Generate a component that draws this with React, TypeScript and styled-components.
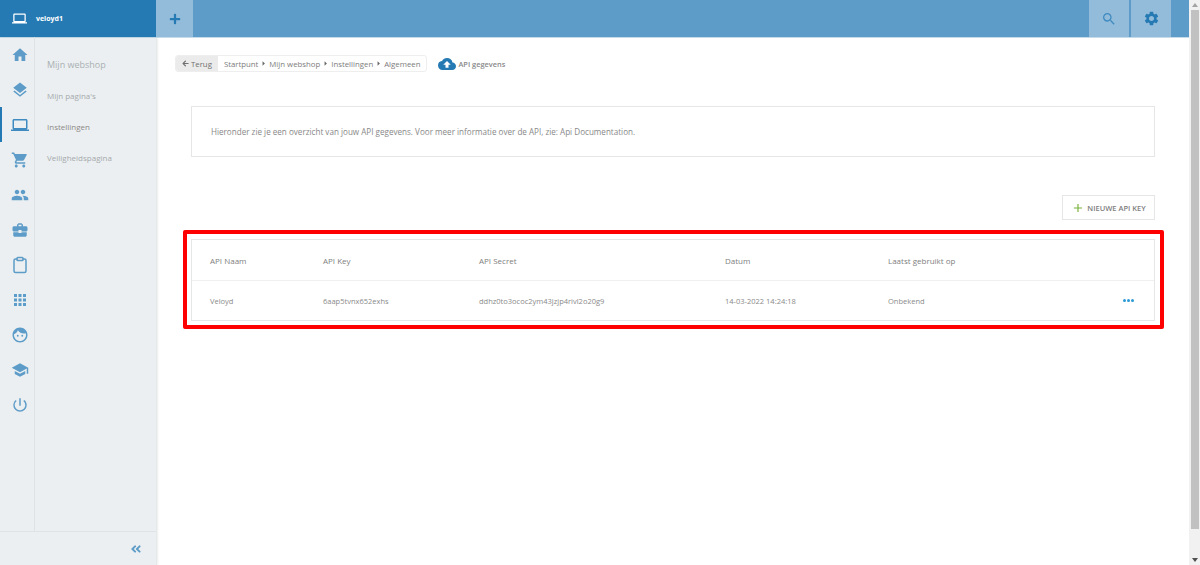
import React from "react";
import styled, { createGlobalStyle } from "styled-components";
import {
  MdHome, MdLayers, MdLaptop, MdShoppingCart, MdPeople, MdBusinessCenter, MdApps, MdFace,
  MdSchool, MdPowerSettingsNew, MdAdd, MdSearch, MdSettings, MdCloudUpload, MdArrowRight,
} from "react-icons/md";
import { FaAngleDoubleLeft, FaPlus, FaArrowLeft } from "react-icons/fa";
import { LuClipboard } from "react-icons/lu";

const Global = createGlobalStyle`
  html, body { margin: 0; padding: 0; height: 100%; overflow: hidden; background: #fff; }
  body { font-family: "Open Sans", "Liberation Sans", sans-serif; font-size: 8px; color: #777; }
  #root { height: 100%; }
`;

const Shell = styled.div`display: flex; height: 565px; width: 1200px;`;
const Page = styled.div`flex: 1; min-width: 0; display: flex; flex-direction: column; position: relative;`;
const Scrollbar = styled.div`width: 11px; background: #f1f1f1; display: flex; flex-direction: column; align-items: center; flex: none; padding-left: 1px; box-sizing: border-box;`;
const ScrollArrow = styled.div<{ $down?: boolean }>`
  height: 10px; width: 100%; display: flex; align-items: center; justify-content: center; flex: none;
  &::before {
    content: ""; border-left: 3px solid transparent; border-right: 3px solid transparent;
    ${(p) => (p.$down ? "border-top: 4px solid #505050;" : "border-bottom: 4px solid #a3a3a3;")}
  }
`;
const ScrollThumb = styled.div`height: 519px; flex: none; width: 8px; background: #c1c1c1;`;
const ScrollTrack = styled.div`flex: 1;`;

const TopBar = styled.header`
  height: 37px; flex: none; display: flex; background: #5d9cc8; border-bottom: 1px solid #c5dbea;
`;
const Brand = styled.div`
  width: 156px; flex: none; background: #267ab3; display: flex; align-items: center; color: #fff;
  padding-left: 12px; box-sizing: border-box; gap: 9px; font-size: 7px; font-weight: 700;
`;
const PlusButton = styled.div`
  width: 37px; background: #93bcdb; color: #267ab3; display: flex; align-items: center; justify-content: center; font-size: 12px;
`;
const Grow = styled.div`flex: 1;`;
const ToolButton = styled.div<{ $dark?: boolean }>`
  width: 40px; background: #93bcdb; color: ${(p) => (p.$dark ? "#267ab3" : "#3f8bc1")};
  display: flex; align-items: center; justify-content: center; font-size: ${(p) => (p.$dark ? 17 : 16)}px; margin-right: 2px;
`;
const TopEnd = styled.div`width: 16px;`;

const Body = styled.div`flex: 1; display: flex; min-height: 0;`;
const Side = styled.aside`
  width: 157px; flex: none; background: #ebeff1; display: flex; flex-direction: column;
  box-shadow: 1px 0 2px rgba(0,0,0,.08); border-right: 1px solid #e6e9ea; box-sizing: border-box;
`;
const SideMain = styled.div`flex: 1; display: flex; border-bottom: 1px solid #dfe3e5;`;
const IconRail = styled.nav`
  width: 35px; flex: none; border-right: 1px solid #dde2e4; box-sizing: border-box;
  display: flex; flex-direction: column; margin-top: -1px; padding-left: 0;
`;
const RailItem = styled.div<{ $active?: boolean }>`
  height: 35px; flex: none; display: flex; align-items: center; justify-content: center; font-size: 18px;
  padding-left: 5px; box-sizing: border-box;
  color: ${(p) => (p.$active ? "#3f8bc1" : "#5d9cc8")};
  box-shadow: ${(p) => (p.$active ? "inset 2px 0 0 #267ab3" : "none")};
`;
const SubMenu = styled.div`flex: 1; padding: 20px 0 0 12px; display: flex; flex-direction: column;`;
const SubTitle = styled.div`font-size: 9px; color: #aab0b3; height: 32px; line-height: 13px;`;
const SubItem = styled.div<{ $active?: boolean }>`
  font-size: 8px; height: 30.8px; line-height: 12px;
  color: ${(p) => (p.$active ? "#8d8a88" : "#a5a9ac")};
`;
const SideFoot = styled.div`
  height: 33px; flex: none; display: flex; align-items: center; justify-content: flex-end;
  padding-right: 14px; color: #5d9cc8; font-size: 12px;
`;

const Main = styled.main`flex: 1; min-width: 0; padding: 17px 34px 0 18px; display: flex; flex-direction: column;`;
const CrumbRow = styled.div`display: flex; align-items: center; height: 17px;`;
const Crumbs = styled.div`
  display: flex; align-items: center; height: 15px; border: 1px solid #eeeeee; border-radius: 3px; background: #fff;
  color: #7c7c7c; font-size: 7.8px; padding-right: 6px;
`;
const Back = styled.div`
  display: flex; align-items: center; height: 100%; background: #ebebeb; padding: 0 6px 0 6px; margin-right: 6px; gap: 2px;
  border-radius: 2px 0 0 2px; color: #707070;
`;
const CrumbSep = styled.span`color: #666; display: inline-flex; font-size: 11px;`;
const PageTitle = styled.div`display: flex; align-items: center; margin-left: 11px; gap: 2px; font-size: 7.4px; font-weight: 600; color: #8a8a8a;`;
const TitleIcon = styled.span`color: #267ab3; font-size: 18px; display: flex; margin-top: 1px;`;
const InfoBox = styled.div`
  margin: 34px 0 0 16px; height: 51px; box-sizing: border-box; border: 1px solid #e6e6e6; display: flex; align-items: center;
  padding-left: 19px; color: #888; font-size: 8.1px;
`;
const Actions = styled.div`display: flex; justify-content: flex-end; margin-top: 38px;`;
const AddButton = styled.div`
  height: 25px; width: 93px; box-sizing: border-box; border: 1px solid #e6e6e6; display: flex; align-items: center; justify-content: center;
  gap: 2px; font-size: 7.5px; font-weight: 600; color: #7d7d7d;
`;
const Plus = styled.span`color: #7bb33d; font-size: 14px; display: flex;`;
const TableCard = styled.div`margin: 19px 0 0 16px; border: 1px solid #e6e6e6; height: 82px; box-sizing: border-box; display: flex; flex-direction: column;`;
const Row = styled.div<{ $head?: boolean }>`
  display: grid; grid-template-columns: 113px 156px 246px 163px 1fr 32px; align-items: center; padding-left: 18px; box-sizing: border-box;
  height: ${(p) => (p.$head ? 41 : 39)}px; flex: none; font-size: ${(p) => (p.$head ? 8 : 7.5)}px; color: ${(p) => (p.$head ? "#808080" : "#8a8a8a")};
  border-bottom: ${(p) => (p.$head ? "1px solid #efefef" : "none")};
`;
const More = styled.span`display: flex; gap: 1px; justify-content: flex-start; margin-left: 1px;`;
const Dot = styled.i`width: 3px; height: 3px; border-radius: 50%; background: #2a9ad6; display: block;`;
const Highlight = styled.div`
  position: absolute; left: 183px; top: 230px; width: 981px; height: 99px; box-sizing: border-box;
  border: 4px solid #ff0000; border-radius: 2px; pointer-events: none;
`;

const railIcons = [
  <MdHome />, <MdLayers />, <MdLaptop />, <MdShoppingCart />, <MdPeople />, <MdBusinessCenter />,
  <LuClipboard />, <MdApps />, <MdFace />, <MdSchool />, <MdPowerSettingsNew />,
];

export default function App() {
  return (
    <Shell>
      <Global />
      <Page>
        <TopBar>
          <Brand><MdLaptop size={15} />veloyd1</Brand>
          <PlusButton><FaPlus /></PlusButton>
          <Grow />
          <ToolButton><MdSearch /></ToolButton>
          <ToolButton $dark><MdSettings /></ToolButton>
          <TopEnd />
        </TopBar>
        <Body>
          <Side>
            <SideMain>
              <IconRail>
                {railIcons.map((icon, i) => (
                  <RailItem key={i} $active={i === 2}>{icon}</RailItem>
                ))}
              </IconRail>
              <SubMenu>
                <SubTitle>Mijn webshop</SubTitle>
                <SubItem>Mijn pagina's</SubItem>
                <SubItem $active>Instellingen</SubItem>
                <SubItem>Veiligheidspagina</SubItem>
              </SubMenu>
            </SideMain>
            <SideFoot><FaAngleDoubleLeft /></SideFoot>
          </Side>
          <Main>
            <CrumbRow>
              <Crumbs>
                <Back><FaArrowLeft size={7} />Terug</Back>
                Startpunt <CrumbSep><MdArrowRight /></CrumbSep> Mijn webshop <CrumbSep><MdArrowRight /></CrumbSep> Instellingen <CrumbSep><MdArrowRight /></CrumbSep> Algemeen
              </Crumbs>
              <PageTitle><TitleIcon><MdCloudUpload /></TitleIcon>API gegevens</PageTitle>
            </CrumbRow>
            <InfoBox>Hieronder zie je een overzicht van jouw API gegevens. Voor meer informatie over de API, zie: Api Documentation.</InfoBox>
            <Actions><AddButton><Plus><MdAdd /></Plus>NIEUWE API KEY</AddButton></Actions>
            <TableCard>
              <Row $head>
                <span>API Naam</span><span>API Key</span><span>API Secret</span><span>Datum</span><span>Laatst gebruikt op</span><span />
              </Row>
              <Row>
                <span>Veloyd</span><span>6aap5tvnx652exhs</span><span>ddhz0to3ococ2ym43jzjp4rivl2o20g9</span><span>14-03-2022 14:24:18</span><span>Onbekend</span>
                <More><Dot /><Dot /><Dot /></More>
              </Row>
            </TableCard>
          </Main>
        </Body>
        <Highlight />
      </Page>
      <Scrollbar><ScrollArrow /><ScrollThumb /><ScrollTrack /><ScrollArrow $down /></Scrollbar>
    </Shell>
  );
}
